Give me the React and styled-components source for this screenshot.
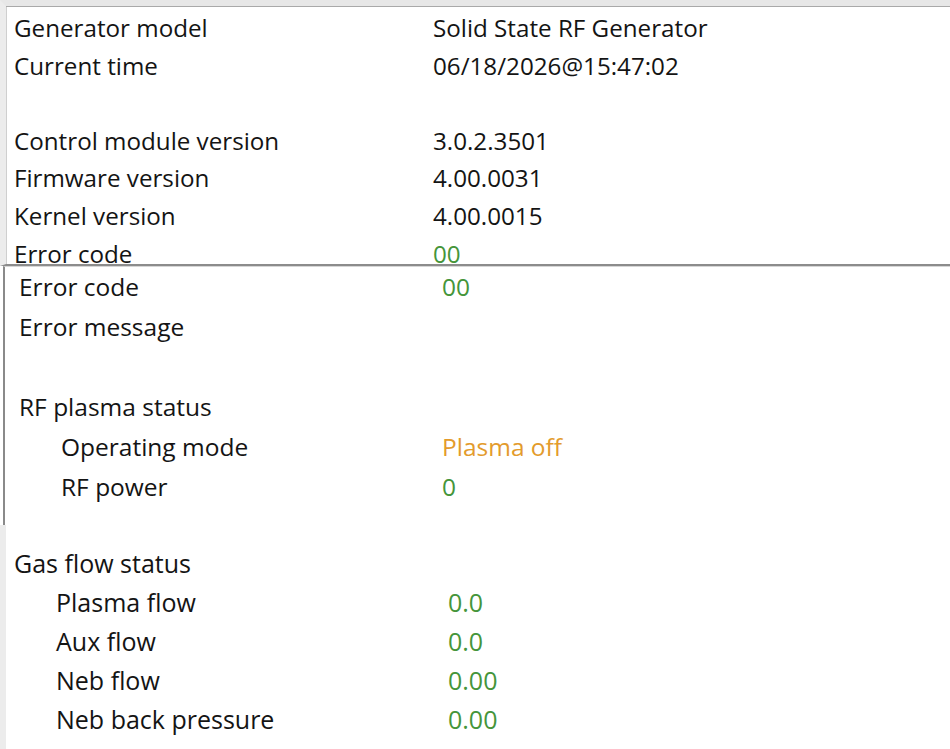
import React from "react";
import styled, { createGlobalStyle } from "styled-components";

const GlobalStyle = createGlobalStyle`
  html, body {
    margin: 0;
    padding: 0;
    background: #ffffff;
  }
  body {
    width: 950px;
    height: 749px;
    overflow: hidden;
    font-family: "Open Sans", "Noto Sans", sans-serif;
    color: #141414;
  }
`;

const Page = styled.div`
  display: flex;
  flex-direction: column;
  width: 950px;
  height: 749px;
  background: #ffffff;
`;

// first capture: generator info, with the window's top frame
const TopPanel = styled.section`
  box-sizing: border-box;
  height: 266px;
  display: flex;
  flex-direction: column;
  padding: 3px 0 0 8px;
  border-top: 6px solid #e7e7e7;
  border-left: 6px solid #ececec;
  border-bottom: 2px solid #8c8c8c;
  box-shadow: inset 0 1px 0 #a9a9a9, inset 1px 0 0 #cfcfcf;
`;

// second capture: error + plasma, framed by a dark line on the left
const MiddlePanel = styled.section`
  box-sizing: border-box;
  height: 259px;
  display: flex;
  flex-direction: column;
  padding: 0 0 0 14px;
  margin-left: 3px;
  border-left: 2px solid #8a8a8a;
  border-top: 1px solid #d6d6d6;
`;

// third capture: gas flows
const BottomPanel = styled.section`
  box-sizing: border-box;
  flex: 1;
  display: flex;
  flex-direction: column;
  padding: 19px 0 0 8px;
  border-left: 6px solid #ececec;
`;

const Row = styled.div`
  display: grid;
  grid-template-columns: ${(p) => p.$labelWidth}px 1fr;
  align-items: center;
  height: ${(p) => p.$pitch}px;
  flex-shrink: 0;
  font-size: ${(p) => p.$size}px;
  font-weight: 500;
  line-height: 1.05;
  white-space: nowrap;
`;

const Label = styled.div`
  padding-left: ${(p) => (p.$indent ? 42 : 0)}px;
`;

const valueColors = {
  plain: "#141414",
  ok: "#45953a",
  warn: "#e39b2c",
};

const Value = styled.div`
  color: ${(p) => valueColors[p.$tone || "plain"]};
  font-weight: ${(p) => (p.$tone ? 400 : 500)};
`;

const Blank = styled.div`
  height: ${(p) => p.$pitch}px;
  flex-shrink: 0;
`;

const topRows = [
  { label: "Generator model", value: "Solid State RF Generator" },
  { label: "Current time", value: "06/18/2026@15:47:02" },
  null,
  { label: "Control module version", value: "3.0.2.3501" },
  { label: "Firmware version", value: "4.00.0031" },
  { label: "Kernel version", value: "4.00.0015" },
  { label: "Error code", value: "00", tone: "ok" },
];

const middleRows = [
  { label: "Error code", value: "00", tone: "ok" },
  { label: "Error message", value: "" },
  null,
  { label: "RF plasma status", value: "" },
  { label: "Operating mode", value: "Plasma off", tone: "warn", indent: true },
  { label: "RF power", value: "0", tone: "ok", indent: true },
];

const bottomRows = [
  { label: "Gas flow status", value: "" },
  { label: "Plasma flow", value: "0.0", tone: "ok", indent: true },
  { label: "Aux flow", value: "0.0", tone: "ok", indent: true },
  { label: "Neb flow", value: "0.00", tone: "ok", indent: true },
  { label: "Neb back pressure", value: "0.00", tone: "ok", indent: true },
];

function Rows({ rows, pitch, size, labelWidth }) {
  return rows.map((r, i) =>
    r ? (
      <Row key={i} $pitch={pitch} $size={size} $labelWidth={labelWidth}>
        <Label $indent={r.indent}>{r.label}</Label>
        <Value $tone={r.tone}>{r.value}</Value>
      </Row>
    ) : (
      <Blank key={i} $pitch={pitch} />
    )
  );
}

export default function App() {
  return (
    <Page>
      <GlobalStyle />
      <TopPanel>
        <Rows rows={topRows} pitch={37.6} size={24.2} labelWidth={419} />
      </TopPanel>
      <MiddlePanel>
        <Rows rows={middleRows} pitch={40} size={24.5} labelWidth={423} />
      </MiddlePanel>
      <BottomPanel>
        <Rows rows={bottomRows} pitch={39} size={25} labelWidth={434} />
      </BottomPanel>
    </Page>
  );
}
